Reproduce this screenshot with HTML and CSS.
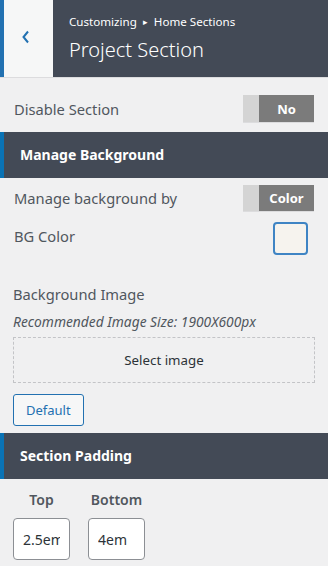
FILE: index.html
```html
<!DOCTYPE html>
<html lang="en">
<head>
<meta charset="UTF-8" />
<meta name="viewport" content="width=device-width, initial-scale=1.0" />
<title>Customizing - Project Section</title>
<link rel="stylesheet" href="styles.css">
</head>
<body>
  <div class="panel-head">
    <button class="back-btn" aria-label="Back">
      <svg width="10" height="16" viewBox="0 0 10 16"><path d="M7 2.5 L2.5 8 L7 13.5" fill="none" stroke="#2271b1" stroke-width="2"/></svg>
    </button>
    <div class="head-title">
      <div class="crumb">Customizing <span class="arrow">&#9656;</span> Home Sections</div>
      <div class="title">Project Section</div>
    </div>
  </div>

  <div class="control row first">
    <span class="label">Disable Section</span>
    <div class="toggle"><span class="toggle-off"></span><span class="toggle-on">No</span></div>
  </div>

  <div class="section-head">Manage Background</div>

  <div class="control row bg-by">
    <span class="label">Manage background by</span>
    <div class="toggle small"><span class="toggle-off"></span><span class="toggle-on">Color</span></div>
  </div>

  <div class="control row bg-color">
    <span class="label">BG Color</span>
    <span class="swatch"></span>
  </div>

  <div class="control image-ctl">
    <div class="label">Background Image</div>
    <div class="desc">Recommended Image Size: 1900X600px</div>
    <div class="dropzone">Select image</div>
    <button class="default-btn">Default</button>
  </div>

  <div class="section-head">Section Padding</div>

  <div class="control padding-ctl">
    <div class="pad-col">
      <span class="pad-label">Top</span>
      <input class="pad-input" type="text" value="2.5em">
    </div>
    <div class="pad-col">
      <span class="pad-label">Bottom</span>
      <input class="pad-input" type="text" value="4em">
    </div>
  </div>
</body>
</html>
```

FILE: styles.css
```css
body {
  margin: 0;
  background: #f0f0f1;
  font-family: "Noto Sans", "Open Sans", sans-serif;
  font-size: 14px;
  color: #50575e;
  overflow: hidden;
}

/* header */
.panel-head {
  display: flex;
  height: 77px;
  border-bottom: 1px solid #dcdcde;
}
.back-btn {
  width: 53px;
  border: 0;
  border-left: 4px solid #2271b1;
  background: #f6f7f7;
  display: flex;
  align-items: center;
  justify-content: center;
  padding: 0 6px 3px 0;
  cursor: pointer;
}
.head-title {
  flex: 1;
  background: #434a56;
  color: #fff;
  padding: 12px 0 0 16px;
}
.crumb {
  font-size: 11.6px;
  line-height: 20px;
}
.crumb .arrow { font-size: 9px; margin: 0 3px; position: relative; top: -1px; }
.title {
  font-size: 20px;
  font-weight: 300;
  line-height: 28px;
  margin-top: 3px;
}

/* controls */
.control { padding: 0 14px; }
.row {
  display: flex;
  align-items: center;
  justify-content: space-between;
}
.row.first { margin-top: 17px; margin-bottom: 10px; }
.row.bg-by { margin-top: 7px; }
.row.bg-color { margin-top: 11px; padding-right: 20px; }
.row.bg-color .label { margin-bottom: 5px; }

.label { font-size: 14.7px; color: #50575e; }

.toggle {
  display: flex;
  width: 71px;
  height: 27px;
  box-shadow: 0 1px 0 #dcdcde;
}
.toggle.small { height: 26px; }
.toggle-off { width: 16px; background: #d4d4d4; }
.toggle-on {
  flex: 1;
  background: #7b7b7b;
  color: #fff;
  font-weight: bold;
  font-size: 13px;
  display: flex;
  align-items: center;
  justify-content: center;
}

.swatch {
  width: 31px;
  height: 29px;
  border: 2px solid #3f84c4;
  border-radius: 4px;
  background: #f6f3ee;
}

.section-head {
  height: 46px;
  background: #434a56;
  border-left: 4px solid #0a73b5;
  color: #fff;
  font-weight: bold;
  font-size: 14px;
  line-height: 46px;
  padding-left: 16px;
}

.image-ctl { padding: 0 13px 7px; margin-top: 29px; }
.image-ctl .label { line-height: 20px; }
.desc {
  font-style: italic;
  font-size: 13.8px;
  margin-top: 8px;
  line-height: 20px;
}
.dropzone {
  margin-top: 5px;
  height: 44px;
  border: 1px dashed #c3c4c7;
  display: flex;
  align-items: center;
  justify-content: center;
  color: #2c3338;
  font-size: 13.3px;
}
.default-btn {
  margin-top: 11px;
  height: 32px;
  padding: 0 12px;
  border: 1px solid #2271b1;
  border-radius: 3px;
  background: #f6f7f7;
  color: #2271b1;
  font-family: inherit;
  font-size: 13px;
}

.padding-ctl {
  display: flex;
  gap: 18px;
  padding: 11px 13px 0;
}
.pad-col {
  display: flex;
  flex-direction: column;
  align-items: center;
}
.pad-label {
  font-weight: 600;
  font-size: 14px;
  line-height: 20px;
  margin-bottom: 8px;
}
.pad-input {
  box-sizing: border-box;
  width: 57px;
  height: 42px;
  border: 1px solid #8c8f94;
  border-radius: 4px;
  background: #fff;
  padding: 0 9px;
  font-family: inherit;
  font-size: 14px;
  color: #2c3338;
}
```
